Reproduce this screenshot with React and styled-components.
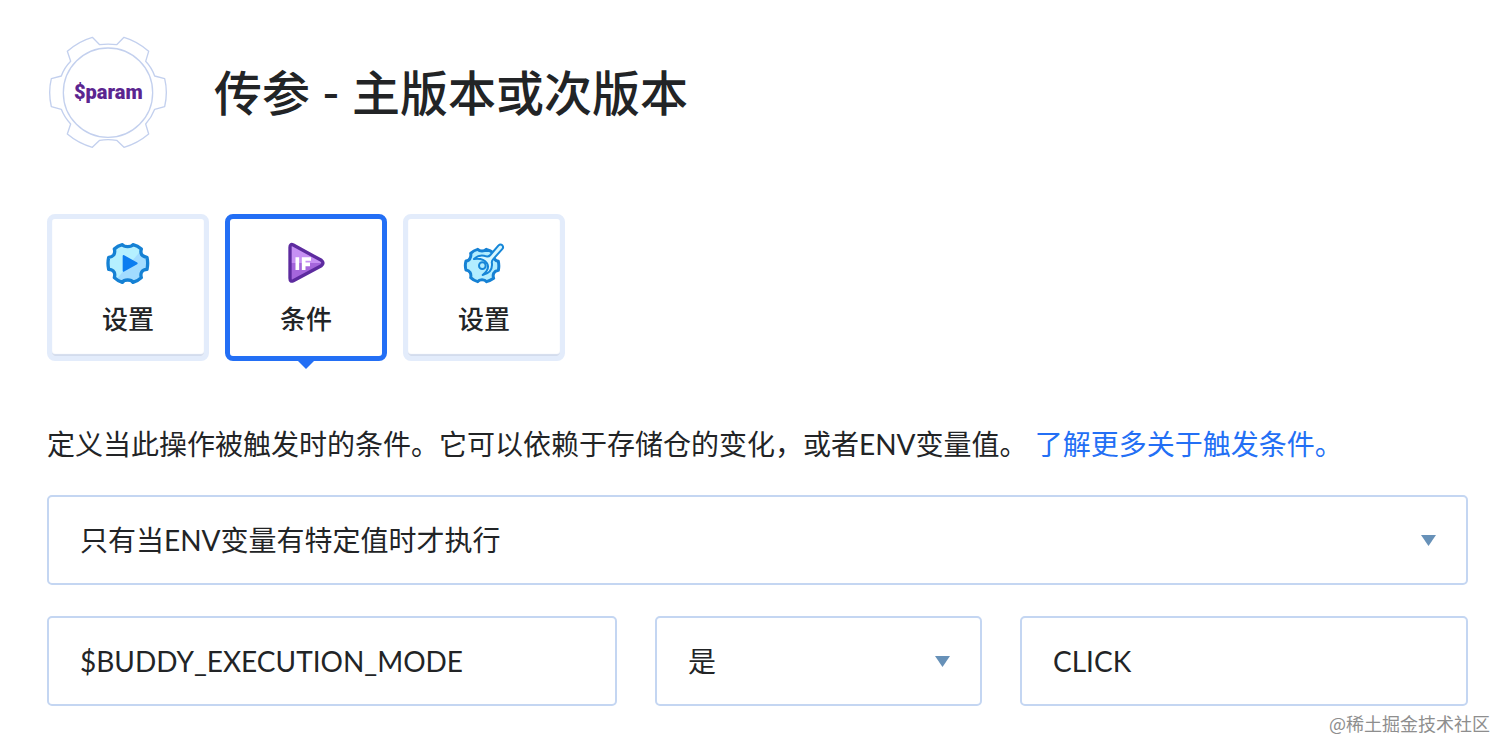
import React, { useState } from 'react';
import styled, { createGlobalStyle } from 'styled-components';

const GlobalStyles = createGlobalStyle`
  * {
    box-sizing: border-box;
  }

  body {
    margin: 0;
    background-color: #ffffff;
    color: #222426;
    font-family: Lato, 'Noto Sans CJK SC', sans-serif;
    font-size: 28px;
  }

  button,
  input,
  select {
    color: inherit;
    font: inherit;
  }
`;

const ParamLogo = () => (
  <svg width='120' height='113' viewBox='51 48 360 339' role='img' aria-label='$param'>
    <g fill='none' stroke='#c3d0ee' strokeWidth='4' strokeLinejoin='round'>
      <path d='M187 52Q145 64 112 94L122 124Q103 143 94 168L64 176Q54 217 64 260L94 268Q103 292 122 312L112 342Q145 370 187 382L209 361Q234 357 260 361L282 382Q323 370 356 342L347 312Q365 292 374 268L404 260Q414 217 404 176L374 168Q365 143 347 124L356 94Q323 64 282 52L260 74Q234 71 209 74Z' />
      <circle cx='234' cy='218' r='134' />
    </g>
    <LogoText x='235' y='236' textAnchor='middle'>
      $param
    </LogoText>
  </svg>
);

const RunIcon = () => (
  <svg width='44' height='43' viewBox='200 110 132 129' aria-hidden='true'>
    <path
      d='M249 118Q253 124 265 124Q277 124 281 118Q295 121 306 131Q302 145 310 151Q315 155 323 156Q327 174 323 192Q311 193 307 200Q303 207 306 217Q296 227 281 231Q277 224 265 224Q253 224 249 231Q235 227 225 217Q228 206 224 200Q220 193 208 192Q204 174 208 156Q218 155 223 149Q228 142 225 131Q235 121 249 118Z'
      fill='#b5f0ff'
    />
    <path d='M302 139L310 151L323 156Q327 174 323 192L307 200L306 217L281 231L265 224L249 231L232 221Z' fill='#a2dcff' />
    <path
      d='M249 118Q253 124 265 124Q277 124 281 118Q295 121 306 131Q302 145 310 151Q315 155 323 156Q327 174 323 192Q311 193 307 200Q303 207 306 217Q296 227 281 231Q277 224 265 224Q253 224 249 231Q235 227 225 217Q228 206 224 200Q220 193 208 192Q204 174 208 156Q218 155 223 149Q228 142 225 131Q235 121 249 118Z'
      fill='none'
      stroke='#1581d4'
      strokeWidth='10'
      strokeLinejoin='round'
    />
    <path d='M253 152L292 174L253 196Z' fill='#0c7df0' stroke='#0c7df0' strokeWidth='6' strokeLinejoin='round' />
  </svg>
);

const ConditionIcon = () => (
  <svg width='44' height='43' viewBox='208 110 132 129' aria-hidden='true'>
    <path d='M236 119Q226 114 226 126V219Q226 231 236 226L320 181Q330 173 320 165Z' fill='#a566dc' />
    <path d='M236 119Q226 114 226 126V173H325Q325 168 320 165Z' fill='#c690f3' />
    <path
      d='M236 119Q226 114 226 126V219Q226 231 236 226L320 181Q330 173 320 165Z'
      fill='none'
      stroke='#5d2b9f'
      strokeWidth='10'
      strokeLinejoin='round'
    />
    <path d='M248 156V194M267 194V161H289M267 177H286' fill='none' stroke='#ffffff' strokeWidth='11' />
  </svg>
);

const ToolsIcon = () => (
  <svg width='44' height='43' viewBox='200 110 132 129' aria-hidden='true'>
    <path
      d='M247 132Q252 137 260 137Q268 137 273 132Q285 135 296 144Q293 156 298 162Q302 167 309 168Q312 182 309 195Q299 197 295 204Q292 211 295 219Q285 226 274 229Q269 223 260 223Q251 223 247 229Q235 226 226 217Q228 208 224 201Q220 195 212 194Q208 181 212 167Q221 166 224 159Q228 152 226 144Q235 135 247 132Z'
      fill='#b2edff'
      stroke='#1581d4'
      strokeWidth='9'
      strokeLinejoin='round'
    />
    <path
      d='M236 161Q252 145 273 153Q280 155 285 149L309 121Q315 115 321 120Q326 126 320 132L293 162Q288 167 290 175Q292 202 262 209Q285 190 275 174Q263 157 236 161Z'
      fill='#d7f7ff'
      stroke='#1686d8'
      strokeWidth='6'
      strokeLinejoin='round'
    />
    <circle cx='261' cy='181' r='10' fill='#b2edff' stroke='#1686d8' strokeWidth='6' />
  </svg>
);

const tabs = [
  { id: 'run', label: '设置', Icon: RunIcon },
  { id: 'condition', label: '条件', Icon: ConditionIcon },
  { id: 'options', label: '设置', Icon: ToolsIcon },
];

const SelectField = ({ label, children }) => (
  <SelectWrapper>
    <Select aria-label={label}>{children}</Select>
    <Arrow width='15' height='11' viewBox='0 0 15 11' aria-hidden='true'>
      <path d='M0 0H15L7.5 11Z' fill='#6791b8' />
    </Arrow>
  </SelectWrapper>
);

const App = () => {
  const [active, setActive] = useState('condition');

  return (
    <>
      <GlobalStyles />
      <Page>
        <Header>
          <ParamLogo />
          <Title>传参 - 主版本或次版本</Title>
        </Header>
        <Tabs role='tablist'>
          {tabs.map(({ id, label, Icon }) => (
            <Tab
              key={id}
              type='button'
              role='tab'
              aria-selected={active === id}
              $active={active === id}
              onClick={() => setActive(id)}
            >
              <Icon />
              {label}
            </Tab>
          ))}
        </Tabs>
        <Description>
          定义当此操作被触发时的条件。它可以依赖于存储仓的变化，或者ENV变量值。{' '}
          <a href='#conditions'>了解更多关于触发条件。</a>
        </Description>
        <Form>
          <SelectField label='触发条件'>
            <option>只有当ENV变量有特定值时才执行</option>
          </SelectField>
          <Row>
            <Input aria-label='变量' defaultValue='$BUDDY_EXECUTION_MODE' />
            <SelectField label='运算符'>
              <option>是</option>
            </SelectField>
            <Input aria-label='值' defaultValue='CLICK' />
          </Row>
        </Form>
      </Page>
      <Watermark>@稀土掘金技术社区</Watermark>
    </>
  );
};

const borderColor = '#c4d6f2';

const Page = styled.main`
  padding: 36px 44px 0 47px;
`;

const Header = styled.header`
  display: flex;
  align-items: center;
  gap: 47px;
`;

const LogoText = styled.text`
  fill: #5b2590;
  font-family: Roboto, sans-serif;
  font-size: 60px;
  font-weight: 900;
`;

const Title = styled.h1`
  margin: 0;
  font-size: 48px;
  font-weight: 500;
  line-height: 72px;
`;

const Tabs = styled.div`
  display: flex;
  gap: 16px;
  margin-top: 65px;
`;

const Tab = styled.button`
  position: relative;
  display: flex;
  flex-direction: column;
  align-items: center;
  gap: 14px;
  width: 162px;
  padding: 23px 0 17px;
  border: 5px solid ${({ $active }) => ($active ? '#236ff5' : '#e3ecfb')};
  border-radius: 8px;
  background-color: #ffffff;
  box-shadow: ${({ $active }) => ($active ? 'none' : 'inset 0 -2px 1px #d3dced')};
  font-size: 26px;
  font-weight: 500;
  line-height: 40px;
  cursor: pointer;

  &::after {
    content: '';
    display: ${({ $active }) => ($active ? 'block' : 'none')};
    position: absolute;
    top: 100%;
    left: 50%;
    margin: 4px 0 0 -9px;
    border: 9px solid transparent;
    border-top-color: #236ff5;
    border-bottom: 0;
  }
`;

const Description = styled.p`
  margin: 60px 0 28px;
  line-height: 46px;

  a {
    color: #236ff5;
    text-decoration: none;
  }
`;

const Form = styled.form`
  display: grid;
  gap: 31px;
`;

const Row = styled.div`
  display: grid;
  grid-template-columns: 570fr 327fr 448fr;
  gap: 38px;
`;

const Input = styled.input`
  width: 100%;
  min-width: 0;
  height: 90px;
  padding: 0 31px;
  border: 2px solid ${borderColor};
  border-radius: 5px;
  background-color: #ffffff;
`;

const SelectWrapper = styled.div`
  position: relative;
  display: flex;
  align-items: center;
`;

const Select = styled(Input).attrs({ as: 'select' })`
  appearance: none;
`;

const Arrow = styled.svg`
  position: absolute;
  right: 32px;
  pointer-events: none;
`;

const Watermark = styled.footer`
  padding: 4px 22px 0;
  color: #8e8e8e;
  font-family: 'Noto Sans CJK SC', sans-serif;
  font-size: 18px;
  line-height: 26px;
  text-align: right;
`;

export default App;
